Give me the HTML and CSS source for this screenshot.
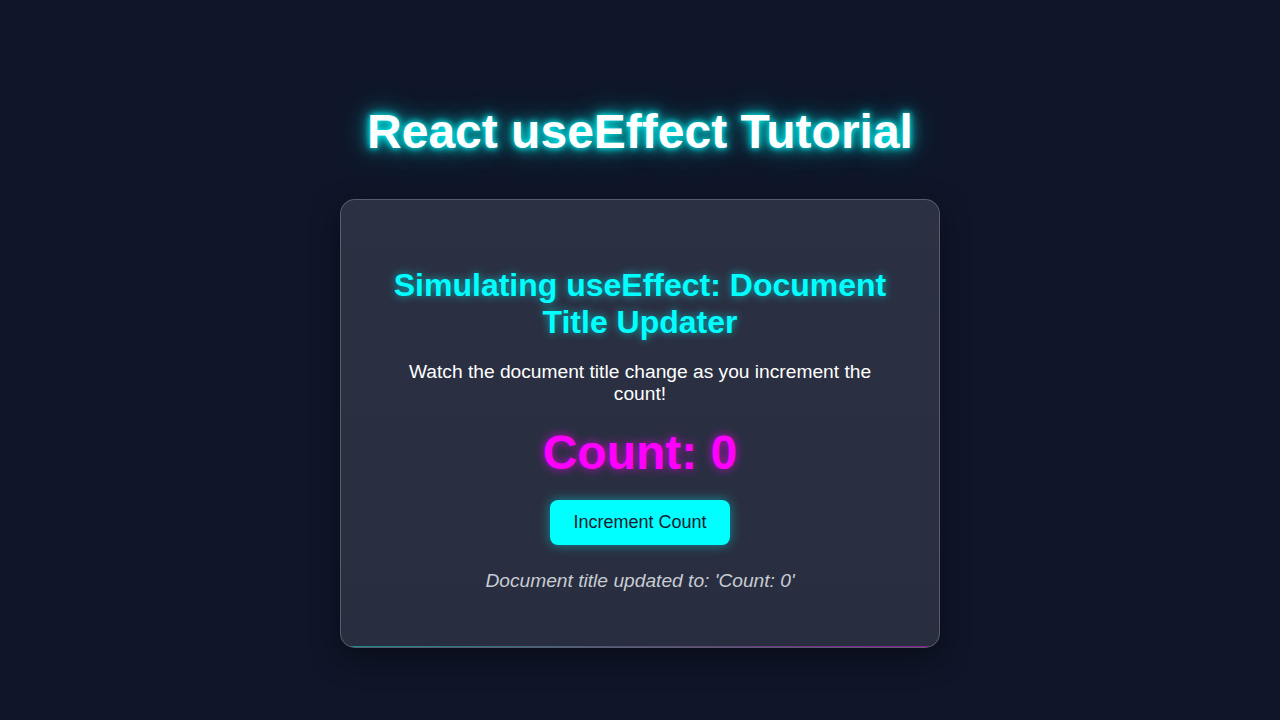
FILE: index.html
```html
<!DOCTYPE html>
<html lang="en">
<head>
<meta charset="utf-8">
<title>Count: 0</title>
<link rel="stylesheet" href="styles.css">
</head>
<body>
<main class="page">
  <h1 class="main-title">React useEffect Tutorial</h1>
  <section class="card">
    <h2 class="card-title">Simulating useEffect: Document Title Updater</h2>
    <p class="desc">Watch the document title change as you increment the count!</p>
    <div class="count">Count: 0</div>
    <button class="btn" type="button">Increment Count</button>
    <p class="status">Document title updated to: 'Count: 0'</p>
  </section>
</main>
</body>
</html>
```
FILE: styles.css
```css
html, body {
  margin: 0;
  padding: 0;
  background: #0f1629;
  height: 100%;
}
body {
  font-family: "Liberation Sans", Arial, sans-serif;
  color: #ffffff;
}
.page {
  display: flex;
  flex-direction: column;
  align-items: center;
  padding-top: 104px;
}
.main-title {
  margin: 0 0 40px;
  font-size: 48px;
  line-height: 55px;
  font-weight: 700;
  color: #ffffff;
  text-shadow: 0 0 6px #00ffff, 0 0 14px #00e5e5, 0 0 30px rgba(0, 255, 255, 0.45);
}
.card {
  position: relative;
  box-sizing: border-box;
  width: 600px;
  padding: 40px 40px 40px;
  background: linear-gradient(180deg, #2b3043 0%, #282e3f 100%);
  border: 1px solid rgba(255, 255, 255, 0.22);
  border-radius: 15px;
  box-shadow: 0 10px 30px rgba(0, 0, 0, 0.45);
  text-align: center;
  overflow: hidden;
}
.card::after {
  content: "";
  position: absolute;
  left: 0;
  right: 0;
  bottom: 0;
  height: 1px;
  background: linear-gradient(90deg, rgba(0, 255, 255, 0.45), rgba(150, 130, 200, 0.4), rgba(255, 0, 255, 0.45));
}
.card-title {
  margin: 27px 0 20px;
  font-size: 32px;
  line-height: 37px;
  font-weight: 700;
  color: #00ffff;
  text-shadow: 0 0 8px rgba(0, 255, 255, 0.6);
}
.desc {
  max-width: 480px;
  margin: 0 auto 20px;
  font-size: 19.2px;
  line-height: 22px;
  color: #ffffff;
}
.count {
  margin: 0 0 20px;
  font-size: 48px;
  line-height: 55px;
  font-weight: 700;
  color: #ff00ff;
  text-shadow: 0 0 10px rgba(255, 0, 255, 0.7);
}
.btn {
  display: block;
  margin: 0 auto;
  width: 180px;
  height: 45px;
  border: none;
  border-radius: 8px;
  background: #00ffff;
  color: #1a1d2e;
  font-family: "Liberation Sans", Arial, sans-serif;
  font-size: 18px;
  box-shadow: 0 0 12px rgba(0, 255, 255, 0.45);
  cursor: pointer;
}
.status {
  margin: 25px 0 15px;
  font-size: 19.2px;
  line-height: 22px;
  font-style: italic;
  color: #c8ccd4;
}
```
